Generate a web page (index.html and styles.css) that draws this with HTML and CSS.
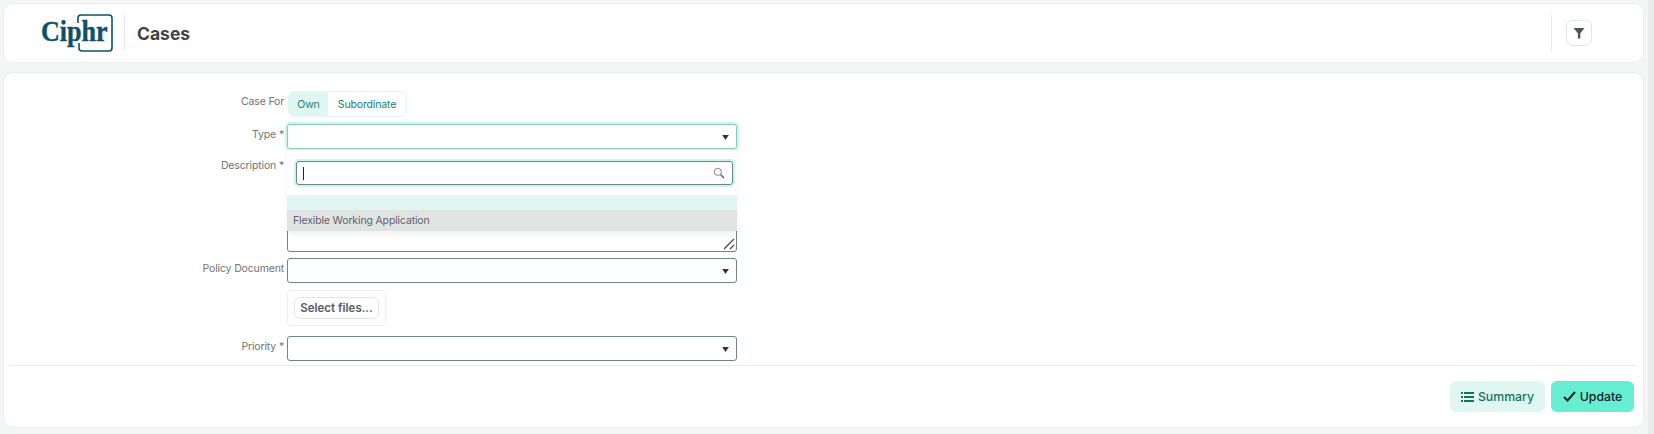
FILE: index.html
```html
<!DOCTYPE html>
<html lang="en">
<head>
    <meta charset="UTF-8">
    <title>Cases</title>
    <link rel="stylesheet" href="styles.css">
</head>
<body>
    <div class="page">
        <!-- Header -->
        <header class="card header">
            <svg class="logo" width="72" height="38" viewBox="0 0 72 38">
                <path d="M37 9V4a3 3 0 0 1 3-3h28a3 3 0 0 1 3 3v30a3 3 0 0 1-3 3H41a3 3 0 0 1-3-3v-5" fill="none" stroke="#0f5068" stroke-width="1.6"/>
                <text transform="scale(0.9 1)" x="0" y="27" class="logo-text">Ciphr</text>
            </svg>
            <div class="divider"></div>
            <h1>Cases</h1>
            <div class="header-right">
                <div class="divider"></div>
                <button class="filter-btn">
                    <svg width="12" height="12" viewBox="0 0 12 12"><path d="M0.500 1h11L7.300 6.300V11.500H4.900V6.300z" fill="#4d5356"/></svg>
                </button>
            </div>
        </header>

        <main class="card content">
            <form class="form">
                <div class="row row-case">
                    <label>Case For</label>
                    <div class="toggle">
                        <span class="toggle-item active">Own</span>
                        <span class="toggle-item">Subordinate</span>
                    </div>
                </div>

                <div class="row row-type">
                    <label>Type *</label>
                    <div class="select focused">
                        <svg class="caret" width="7" height="5" viewBox="0 0 8 6"><path d="M0 0h8L4 6z"/></svg>
                    </div>
                    <!-- Open dropdown -->
                    <div class="dropdown">
                        <div class="dropdown-search">
                            <div class="search-box">
                                <span class="cursor"></span>
                                <svg width="12" height="12" viewBox="0 0 12 12"><circle cx="4.800" cy="4.800" r="3.600" fill="none" stroke="#8a8471" stroke-width="1"/><path d="M7.600 7.600L11 11" stroke="#5d6a78" stroke-width="1.500"/></svg>
                            </div>
                        </div>
                        <div class="option-empty"></div>
                        <div class="option">Flexible Working Application</div>
                    </div>
                </div>

                <div class="row row-desc">
                    <label>Description *</label>
                    <div class="textarea">
                        <svg class="grip" width="12" height="12" viewBox="0 0 12 12"><path d="M1 11L11 1M7 11l4-4" stroke="#444" stroke-width="1.200"/></svg>
                    </div>
                </div>

                <div class="row row-policy">
                    <label>Policy Document</label>
                    <div class="select">
                        <svg class="caret" width="7" height="5" viewBox="0 0 8 6"><path d="M0 0h8L4 6z"/></svg>
                    </div>
                </div>

                <div class="row row-upload">
                    <label></label>
                    <div class="upload">
                        <button type="button" class="upload-btn">Select files...</button>
                    </div>
                </div>

                <div class="row row-priority">
                    <label>Priority *</label>
                    <div class="select">
                        <svg class="caret" width="7" height="5" viewBox="0 0 8 6"><path d="M0 0h8L4 6z"/></svg>
                    </div>
                </div>
            </form>

            <div class="actions">
                <button class="btn btn-summary">
                    <svg width="13" height="10" viewBox="0 0 13 10"><path d="M0 0h2v2H0zM0 4h2v2H0zM0 8h2v2H0zM3 0h10v2H3zM3 4h10v2H3zM3 8h10v2H3z" fill="#16705f"/></svg>
                    Summary
                </button>
                <button class="btn btn-update">
                    <svg width="13" height="11" viewBox="0 0 13 11"><path d="M1 6l3.500 3.500L12 1" fill="none" stroke="#12222a" stroke-width="2"/></svg>
                    Update
                </button>
            </div>
        </main>
    </div>
</body>
</html>
```

FILE: styles.css
```css
* {
    box-sizing: border-box;
}
body {
    margin: 0;
    height: 434px;
    overflow: hidden;
    background-color: #f4f6f5;
    font-family: "Inter", "Liberation Sans", sans-serif;
    font-size: 10.500px;
    letter-spacing: -0.150px;
    color: #6f7474;
}
.page {
    width: 1654px;
    height: 434px;
    padding: 3px 4px 0 3px;
    border-right: 6px solid #ebedec;
}
.card {
    background-color: white;
    border: 1px solid #eceeed;
    border-radius: 10px;
}
.header {
    height: 60px;
    display: flex;
    align-items: center;
    padding-left: 37px;
    margin-bottom: 9px;
}
.logo {
    display: block;
}
.logo-text {
    font-family: "Liberation Serif", serif;
    font-weight: bold;
    font-size: 29px;
    letter-spacing: 0;
    fill: #0f5068;
    stroke: #0f5068;
    stroke-width: 0.4px;
}
.divider {
    width: 1px;
    height: 36px;
    background-color: #e6e8e7;
}
.header > .divider {
    margin-left: 11px;
}
h1 {
    margin: 0 0 0 12px;
    font-size: 17.500px;
    font-weight: 700;
    letter-spacing: 0;
    color: #3f4547;
}
.header-right {
    margin-left: auto;
    display: flex;
    align-items: center;
    gap: 14px;
    padding-right: 51px;
}
.filter-btn {
    width: 26px;
    height: 26px;
    padding: 0;
    background-color: white;
    border: 1px solid #e4e6e6;
    border-radius: 6px;
    display: flex;
    align-items: center;
    justify-content: center;
}
.content {
    height: 356px;
    padding: 18px 7px 0 7px;
}
.form {
    height: 275px;
    border-bottom: 1px solid #e8eaea;
}
.row {
    display: flex;
    position: relative;
}
.row label {
    width: 276px;
    padding-right: 3px;
    text-align: right;
    flex-shrink: 0;
}
.row-case {
    height: 26px;
    margin-bottom: 7px;
}
.row-case label {
    padding-top: 4px;
}
.row-type {
    height: 25px;
    margin-bottom: 6px;
}
.row-type label, .row-policy label, .row-priority label {
    padding-top: 4px;
}
.row-desc {
    height: 97px;
    margin-bottom: 6px;
}
.row-desc label {
    padding-top: 4px;
}
.row-policy {
    height: 25px;
    margin-bottom: 7px;
}
.row-upload {
    height: 36px;
    margin-bottom: 10px;
}
.row-priority {
    height: 25px;
}
.toggle {
    display: flex;
    margin-left: 1px;
    width: 119px;
    border: 1px solid #e0f6f0;
    border-radius: 6px;
    overflow: hidden;
    color: #16807a;
}
.toggle-item {
    flex: 1;
    display: flex;
    align-items: center;
    justify-content: center;
}
.toggle-item.active {
    flex: none;
    width: 39px;
    background-color: #e0f7f1;
}
.select, .textarea {
    width: 450px;
    position: relative;
    background-color: white;
    border: 1px solid #76827f;
    border-radius: 3px;
}
.select.focused {
    border-color: #90c9bb;
    box-shadow: 0 0 0 2px #c8f6ec;
}
.caret {
    position: absolute;
    right: 7px;
    top: 10px;
    fill: #30363a;
}
.grip {
    position: absolute;
    right: 1px;
    bottom: 1px;
}
.dropdown {
    position: absolute;
    left: 276px;
    top: 26px;
    z-index: 2;
    width: 450px;
    background-color: white;
    box-shadow: 0 3px 6px rgba(0, 0, 0, 0.06);
}
.dropdown-search {
    height: 45px;
    padding: 11px 4px 0 9px;
}
.search-box {
    height: 24px;
    display: flex;
    align-items: center;
    justify-content: space-between;
    padding: 0 7px 0 6px;
    border: 1px solid #76827f;
    border-radius: 3px;
    box-shadow: 0 0 0 2px #c8f6ec;
}
.cursor {
    width: 1px;
    height: 13px;
    background-color: #222;
}
.option-empty {
    height: 15px;
    background-color: #e0f7f1;
}
.option {
    height: 21px;
    line-height: 21px;
    padding-left: 6px;
    background-color: #e2e3e3;
    color: #5d6468;
}
.upload {
    width: 99px;
    padding: 6px;
    border: 1px solid #efefef;
    border-radius: 3px;
}
.upload-btn {
    width: 85px;
    height: 22px;
    padding: 0;
    background-color: white;
    border: 1px solid #e4e6e6;
    border-radius: 6px;
    font-family: inherit;
    font-size: 11.500px;
    font-weight: 600;
    color: #555b5e;
}
.actions {
    display: flex;
    justify-content: flex-end;
    gap: 6px;
    padding: 15px 2px 0 0;
}
.btn {
    height: 31px;
    display: flex;
    align-items: center;
    justify-content: center;
    gap: 4px;
    border: none;
    border-radius: 6px;
    font-family: inherit;
    font-size: 12.300px;
    font-weight: 500;
    letter-spacing: 0;
}
.btn-summary {
    width: 95px;
    background-color: #e0f7f1;
    color: #16705f;
}
.btn-update {
    width: 83px;
    background-color: #66eed3;
    color: #12222a;
}
```
